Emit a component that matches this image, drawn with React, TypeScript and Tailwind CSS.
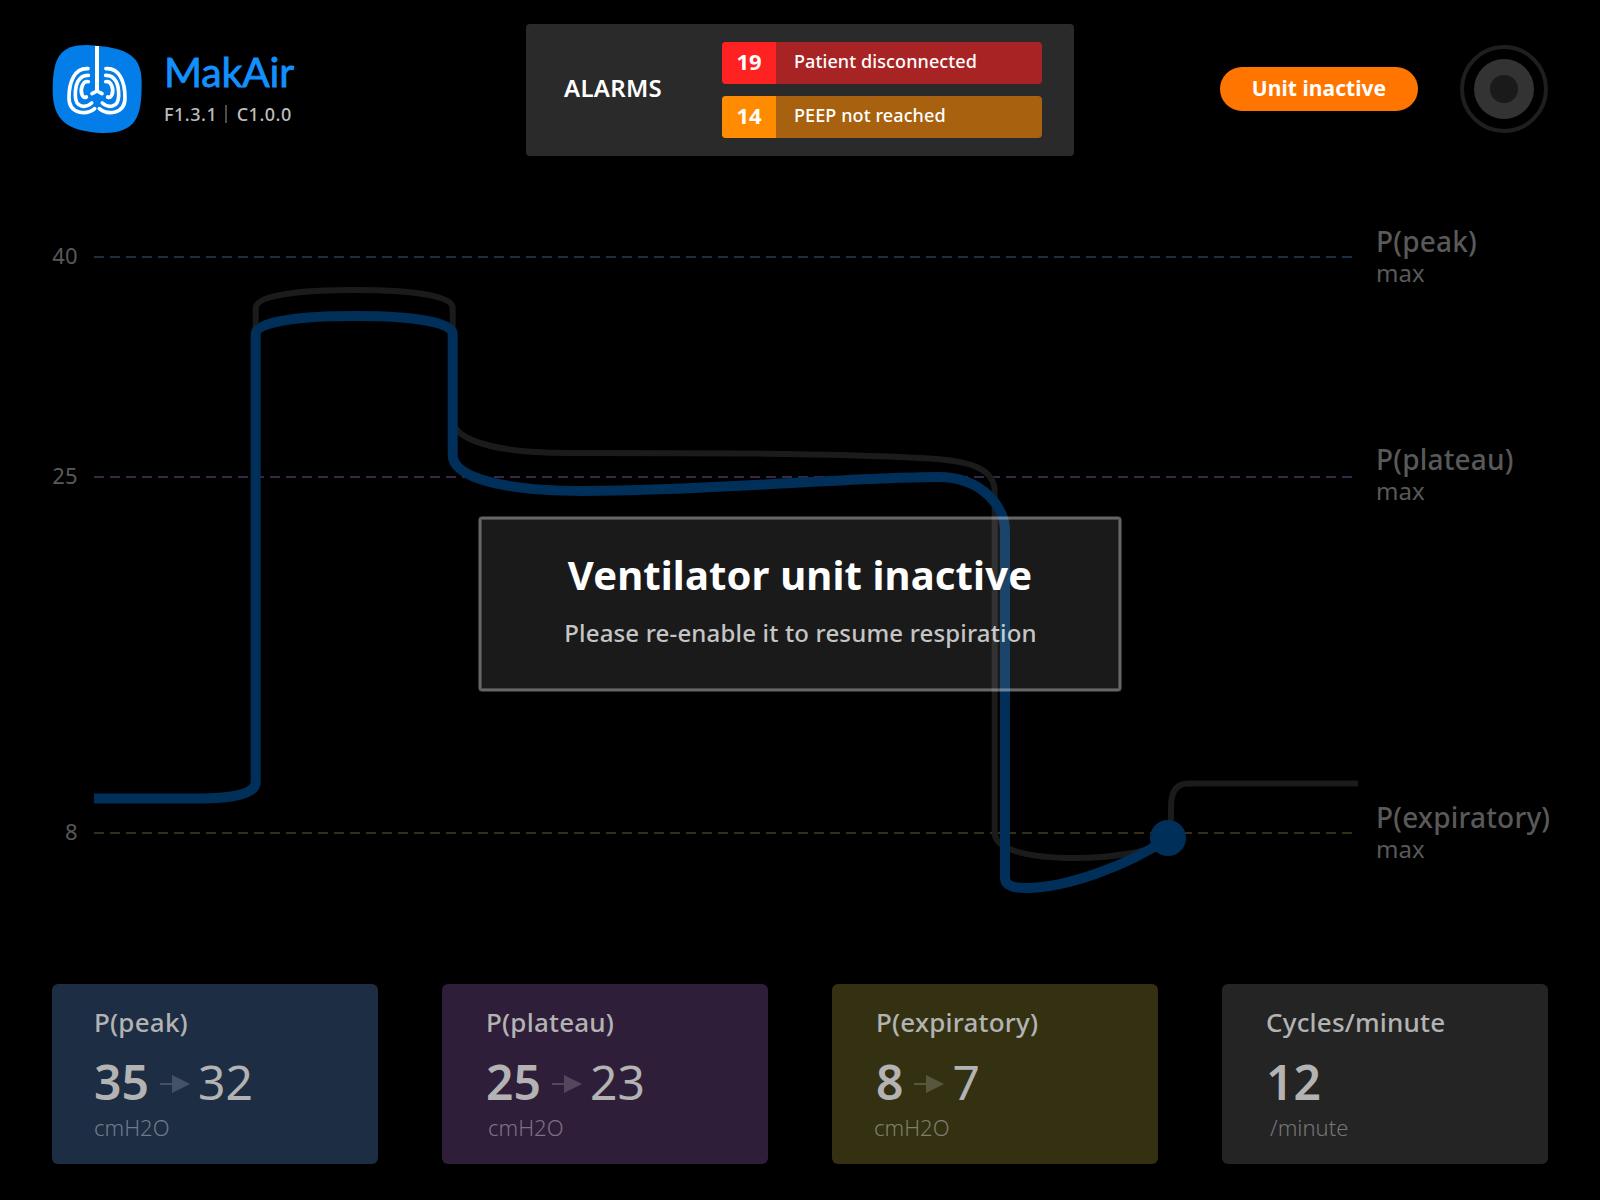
function Logo() {
  return (
    <svg className="h-[90px] w-[92px] shrink-0" viewBox="36 42 276 270" fill="none">
      <path
        d="M38 180C38 80 62 45 140 45C270 52 305 80 305 160C305 260 290 309 190 309C80 305 38 270 38 180Z"
        fill="#037de8"
      />
      <path d="M171 48V184" stroke="#fff" strokeWidth="12" />
      <g stroke="#fff" strokeWidth="11" strokeLinecap="round" strokeLinejoin="round">
        <path d="M171 183L156 191M171 183L186 191" />
        <path d="M144 116C104 113 87 155 87 203C87 253 140 256 164 236" />
        <path d="M145 136C115 135 105 165 106 198C107 235 138 234 155 219" />
        <path d="M145 155C128 151 120 178 126 194C129 202 133 204 139 201" />
        <path d="M198 116C238 113 255 155 255 203C255 253 202 256 178 236" />
        <path d="M197 136C227 135 237 165 236 198C235 235 204 234 187 219" />
        <path d="M197 155C214 151 222 178 216 194C213 202 209 204 203 201" />
      </g>
    </svg>
  );
}

function Alarm({ code, label, badge, bar }: { code: string; label: string; badge: string; bar: string }) {
  return (
    <div className={`flex h-[42px] w-80 overflow-hidden rounded ${bar}`}>
      <div className={`flex w-[54px] justify-center text-[22px] leading-[39px] font-bold ${badge}`}>{code}</div>
      <span className="pl-[18px] text-[18px] leading-[38px] font-medium tracking-[0.1px]">{label}</span>
    </div>
  );
}

function Header() {
  return (
    <header className="flex h-[156px] w-full pl-[52px]">
      <div className="flex w-[474px] pt-11">
        <Logo />
        <div className="ml-5 pt-1.5">
          <div className="font-['Lato'] text-[41px] leading-[44px] tracking-[-0.2px] text-[#1390ff] [-webkit-text-stroke:0.8px_#1390ff]">
            MakAir
          </div>
          <div className="mt-2 flex items-center text-[18px] leading-6 font-medium tracking-[0.5px] text-[#bdbdbd]">
            <span>F1.3.1</span>
            <span className="mr-[9.5px] ml-2 h-[18px] w-0.5 bg-[#4d4d4d]" />
            <span>C1.0.0</span>
          </div>
        </div>
      </div>
      <div className="mt-6 flex h-[132px] w-[548px] items-center justify-between rounded bg-[#2a2a2a] pr-8 pl-[38px] text-white">
        <span className="pb-1 text-[24px] font-semibold tracking-[0.3px]">ALARMS</span>
        <div className="flex flex-col gap-3">
          <Alarm code="19" label="Patient disconnected" badge="bg-[#ff2222]" bar="bg-[#a82424]" />
          <Alarm code="14" label="PEEP not reached" badge="bg-[#ff8c00]" bar="bg-[#a8620f]" />
        </div>
      </div>
      <div className="mt-[45px] flex h-[88px] flex-1 items-center justify-end pr-[52px]">
        <div className="mr-[42px] flex h-11 w-[198px] items-center justify-center rounded-full bg-[#ff7500] text-[21px] font-bold tracking-[0.06px] text-white">
          Unit inactive
        </div>
        <div className="flex size-[88px] items-center justify-center rounded-full border-4 border-[#1f1f1f]">
          <div className="flex size-[60px] items-center justify-center rounded-full bg-[#333333]">
            <div className="size-7 rounded-full bg-[#1a1a1a]" />
          </div>
        </div>
      </div>
    </header>
  );
}

function Threshold({ name }: { name: string }) {
  return (
    <div className="text-[#595959]">
      <div className="text-[28px] leading-8 font-medium tracking-[0.18px]">{name}</div>
      <div className="mt-px text-[24px] leading-[30px]">max</div>
    </div>
  );
}

function Chart() {
  return (
    <main className="flex h-[828px] w-full">
      <div className="flex w-[94px] flex-col pr-[16.5px] text-right text-[22px] leading-[30px] text-[#595959]">
        <span className="mt-[84px]">40</span>
        <span className="mt-[190px]">25</span>
        <span className="mt-[326px]">8</span>
      </div>
      <svg className="h-[828px] w-[1264px]" viewBox="94 156 1264 828" fill="none">
        <g strokeWidth="2" strokeDasharray="10 6">
          <path d="M94 257H1354" stroke="#1d2d44" />
          <path d="M94 477H1354" stroke="#3a2647" />
          <path d="M94 833H1354" stroke="#333015" />
        </g>
        <path
          d="M255.7 782V308C255.7 296 295 290 355 290C415 290 452.7 296 452.7 308V420C454 440 495 453 568 453C700 453 830 453 920 458C970 460 994.7 468 994.7 492V833C994.7 850 1030 858 1075 858C1110 858 1150 852 1165 842L1171 838V807C1171 792 1176 783.5 1188 783.5H1358"
          stroke="#1b1b1b"
          strokeWidth="6"
        />
        <path
          d="M94 798.5H195C237 798.5 255.7 793 255.7 782V334C255.7 322 295 316 355 316C415 316 452.7 322 452.7 334V455C452.7 478 505 491 583 491C710 491 850 477 938 477C985 477 1005 510 1005 530V878C1005 885 1012 888 1026 888C1065 888 1128 866 1168 838"
          stroke="#002f5a"
          strokeWidth="10"
        />
        <circle cx="1168" cy="838" r="18" fill="#002f5a" />
      </svg>
      <div className="flex flex-col pl-[18px]">
        <div className="mt-[69px]">
          <Threshold name="P(peak)" />
        </div>
        <div className="mt-[155px]">
          <Threshold name="P(plateau)" />
        </div>
        <div className="mt-[295px]">
          <Threshold name="P(expiratory)" />
        </div>
      </div>
    </main>
  );
}

function Arrow() {
  return (
    <svg className="mt-1 mr-2 ml-[11px] h-[18px] w-[30px]" viewBox="0 0 30 18" fill="#fff" fillOpacity="0.18">
      <path d="M0 8H12V0L30 9L12 18V10H0Z" />
    </svg>
  );
}

type CardProps = {
  title: string;
  value: string;
  next?: string;
  unit: string;
  color: string;
  pad: string;
  unitShift: string;
};

function Card({ title, value, next, unit, color, pad, unitShift }: CardProps) {
  return (
    <section className={`h-[180px] w-[326px] rounded-md pt-5 ${color} ${pad}`}>
      <h2 className="text-[26px] leading-9 font-medium tracking-[0.2px] text-[#b3b3b3]">{title}</h2>
      <div className="mt-2.5 flex items-center text-[48px] leading-[64px] text-[#b3b3b3]">
        <span className="font-[580]">{value}</span>
        {next && (
          <>
            <Arrow />
            <span>{next}</span>
          </>
        )}
      </div>
      <div className={`-mt-px text-[22px] leading-7 font-[350] text-white/38 ${unitShift}`}>{unit}</div>
    </section>
  );
}

function InactiveNotice() {
  return (
    <div className="absolute top-[516px] left-[478px] h-[176px] w-[644px] rounded border border-white/20">
      <div className="h-full rounded-[3px] border-2 border-white/40">
        <div className="flex h-full flex-col items-center rounded-[1px] border border-white/20 bg-white/10 pt-7">
          <div className="text-[40px] leading-[54px] font-bold tracking-[0.13px] text-white">
            Ventilator unit inactive
          </div>
          <div className="mt-[15px] pl-px text-[24px] leading-8 font-medium tracking-[0.17px] text-white/75">
            Please re-enable it to resume respiration
          </div>
        </div>
      </div>
    </div>
  );
}

export default function App() {
  return (
    <div className="relative h-[1200px] w-[1600px] overflow-hidden bg-black font-['Noto_Sans',sans-serif]">
      <Header />
      <Chart />
      <footer className="flex gap-16 pl-[52px]">
        <Card title="P(peak)" value="35" next="32" unit="cmH2O" color="bg-[#1d2d44]" pad="pl-[42px]" unitShift="ml-0" />
        <Card title="P(plateau)" value="25" next="23" unit="cmH2O" color="bg-[#2f1e39]" pad="pl-11" unitShift="ml-0.5" />
        <Card title="P(expiratory)" value="8" next="7" unit="cmH2O" color="bg-[#343113]" pad="pl-11" unitShift="-ml-0.5" />
        <Card title="Cycles/minute" value="12" unit="/minute" color="bg-[#242424]" pad="pl-11" unitShift="ml-1" />
      </footer>
      <InactiveNotice />
    </div>
  );
}
